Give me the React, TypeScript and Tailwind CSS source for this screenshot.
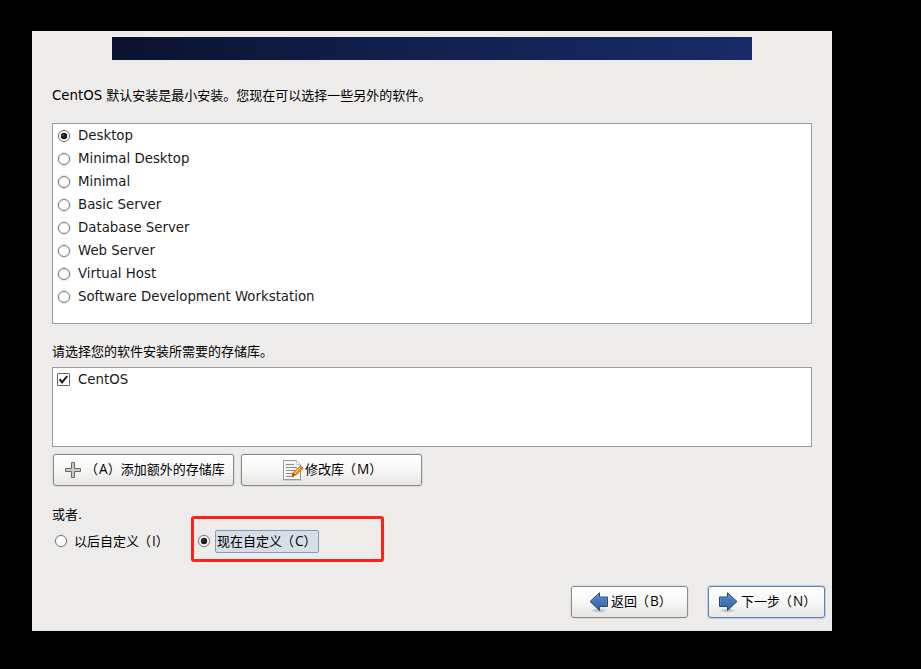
import React from 'react';

const options = [
  'Desktop',
  'Minimal Desktop',
  'Minimal',
  'Basic Server',
  'Database Server',
  'Web Server',
  'Virtual Host',
  'Software Development Workstation',
];

function Radio({ checked = false }: { checked?: boolean }) {
  return (
    <svg className="block h-[14px] w-[14px] shrink-0" viewBox="0 0 14 14">
      <circle cx="7" cy="7" r="6.4" fill="none" stroke="#d8d8d8" strokeWidth="0.8" />
      <circle cx="7" cy="7" r="5.5" fill="#fff" stroke="#777777" strokeWidth="1" />
      {checked && <circle cx="7" cy="7" r="3.2" fill="#1c1c1c" />}
      {checked && <circle cx="6" cy="6" r="0.9" fill="#555" />}
    </svg>
  );
}

function Checkbox() {
  return (
    <svg className="block h-[13px] w-[13px] shrink-0" viewBox="0 0 13 13">
      <rect x="0.5" y="0.5" width="12" height="12" rx="0.5" fill="#fff" stroke="#666" />
      <path d="M2.7 6.2 L5 9.3 L10.2 3.2" fill="none" stroke="#1a1a1a" strokeWidth="2" />
    </svg>
  );
}

function PlusIcon() {
  return (
    <svg className="block h-4 w-4 shrink-0" viewBox="0 0 16 16">
      <path d="M6.5 .5h3v6h6v3h-6v6h-3v-6h-6v-3h6z" fill="#c9cbc8" stroke="#666864" />
    </svg>
  );
}

function EditIcon() {
  return (
    <svg className="block h-[22px] w-[21px] shrink-0" viewBox="0 0 21 22">
      <rect x="0" y="20" width="19" height="2" fill="#cfcfcf" />
      <path d="M.5 1.5h13l4 4v15H.5z" fill="#f4f5f3" stroke="#989a95" />
      <path d="M13.5 1.5v4h4z" fill="#fff" stroke="#b5b7b2" strokeWidth=".7" />
      <path d="M3 5.5h8M3 8.5h11M3 11.5h9M3 14.5h7M3 17.5h8" stroke="#8c8e89" />
      <path d="M9 17.2l1.4-3.8 7.2-6.5 2.5 2.6-7.1 6.4z" fill="#f89a16" stroke="#b25a05" strokeWidth=".8" />
      <path d="M11.5 14l6.5-6" stroke="#ffd36b" strokeWidth="1" />
      <path d="M16.4 7.9l1.3-1.1 2.4 2.5-1.2 1.2z" fill="#ee6c45" />
      <path d="M8.9 17.3l1.3-3 1.9 1.8z" fill="#6b5431" />
    </svg>
  );
}

function Arrow({ right = false }: { right?: boolean }) {
  return (
    <svg className="block h-[20px] w-[20px] shrink-0 overflow-visible" viewBox="0 0 20 20">
      <defs>
        <linearGradient id={right ? 'arrowNext' : 'arrowBack'} x1="0" y1="0" x2="0" y2="1">
          <stop offset="0" stopColor="#5585bf" />
          <stop offset="1" stopColor="#3465a4" />
        </linearGradient>
        <radialGradient id={right ? 'shadeNext' : 'shadeBack'}>
          <stop offset="0" stopColor="#000" stopOpacity=".28" />
          <stop offset="1" stopColor="#000" stopOpacity="0" />
        </radialGradient>
      </defs>
      <ellipse cx="10" cy="18.5" rx="9" ry="2.5" fill={right ? 'url(#shadeNext)' : 'url(#shadeBack)'} />
      <g transform={right ? 'matrix(-1 0 0 1 20 0)' : undefined}>
        <path d="M1 9.5 L10.5 .8V5H18.5V14.5H10.5V18.4Z" fill={right ? 'url(#arrowNext)' : 'url(#arrowBack)'} stroke="#204a87" />
        <path d="M2.5 9.5 L9.5 3V6H17.5V13.5" fill="none" stroke="#87abd5" strokeWidth=".7" opacity=".55" />
      </g>
    </svg>
  );
}

const button =
  'flex h-[32px] shrink-0 items-center rounded-[3px] border border-[#8b8b89] bg-linear-to-b from-white via-[#f7f7f6] to-[#e5e4e2] shadow-[0_0_0_1px_#dddcda] text-black';

function Caption({ before = '', letter, after = '' }: { before?: string; letter: string; after?: string }) {
  return (
    <>
      {before}<span className="-ml-px">（</span><span className="mx-px font-['Open_Sans',sans-serif] text-[13.6px] leading-none">{letter}</span><span className="-ml-px">）</span>{after}
    </>
  );
}

export default function App() {
  return (
    <div className="h-[669px] w-[921px] overflow-hidden bg-black pt-[31px] pl-[32px] font-['DejaVu_Sans','Noto_Sans_CJK_SC',sans-serif] text-[13px] leading-[20px] whitespace-nowrap text-[#1a1a1a]">
      <main className="flex h-[600px] w-[800px] flex-col border-t border-[#f5eeee] bg-[#edecea]">
        <div className="mt-[5px] ml-[80px] h-[23px] w-[640px] shrink-0 bg-linear-to-r from-[#0a1230] via-[#122150] via-50% to-[#182a69]" />
        <p className="mt-[26px] ml-[20px] h-[20px] shrink-0 text-black">
          <span className="text-[13.33px]">CentOS</span> 默认安装是最小安装。您现在可以选择一些另外的软件。
        </p>

        <div className="mt-[17px] ml-[20px] h-[201px] w-[760px] shrink-0 border border-[#9c9a98] bg-white text-[13.33px]">
          {options.map((option, index) => (
            <div key={option} className="flex h-[23px] items-center pl-1">
              <Radio checked={index === 0} />
              <span className="ml-[7px]">{option}</span>
            </div>
          ))}
        </div>

        <p className="mt-[18px] ml-[20px] h-[20px] shrink-0 text-black">请选择您的软件安装所需要的存储库。</p>
        <div className="mt-[5px] ml-[20px] h-[80px] w-[760px] shrink-0 border border-[#9c9a98] bg-white text-[13.33px]">
          <div className="flex h-[23px] items-center pl-1">
            <Checkbox />
            <span className="ml-2">CentOS</span>
          </div>
        </div>

        <div className="mt-[7px] ml-[21px] flex shrink-0 gap-[7px]">
          <button className={`${button} w-[181px] pl-[11px]`}>
            <PlusIcon /><span className="ml-[5px]"><Caption letter="A" after="添加额外的存储库" /></span>
          </button>
          <button className={`${button} w-[181px] pl-[41px]`}>
            <EditIcon /><span className="ml-[1px]"><Caption before="修改库" letter="M" /></span>
          </button>
        </div>

        <p className="mt-[19px] ml-[20px] h-[11px] shrink-0 leading-[20px] text-black">或者.</p>
        <div className="ml-[22px] flex h-[46px] shrink-0 items-center text-black">
          <div className="flex w-[137px] items-center pt-[4px]">
            <Radio />
            <span className="ml-[6px] pt-px"><Caption before="以后自定义" letter="I" /></span>
          </div>
          <div className="flex h-[46px] w-[193px] items-center rounded-[3px] border-[3px] border-[#ff2116] pt-[4px] pl-[3px]">
            <Radio checked />
            <span className="ml-[4px] flex h-[23px] w-[104px] items-center rounded-[2px] border border-[#8299b9] bg-[#d8dee8] pl-[1px]">
              <span className="pt-px"><Caption before="现在自定义" letter="C" /></span>
            </span>
          </div>
        </div>

        <div className="mt-[24px] mr-[7px] flex shrink-0 justify-end gap-5">
          <button className={`${button} w-[117px] pl-[17px]`}>
            <Arrow /><span className="ml-[2px]"><Caption before="返回" letter="B" /></span>
          </button>
          <button className="flex h-[32px] w-[117px] shrink-0 items-center rounded-[3px] border border-[#5f82b2] bg-linear-to-b from-white via-[#f7f7f6] to-[#e9e8e6] pl-[9px] text-black shadow-[0_0_0_1px_#bdcee2]">
            <Arrow right /><span className="ml-[3px]"><Caption before="下一步" letter="N" /></span>
          </button>
        </div>
      </main>
    </div>
  );
}
